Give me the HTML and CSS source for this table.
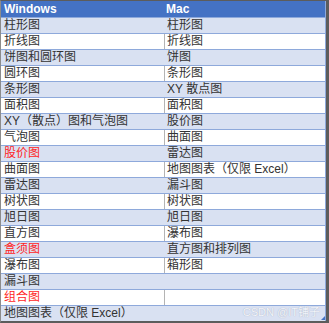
FILE: index.html
```html
<!DOCTYPE html>
<html>
<head>
<meta charset="utf-8">
<link rel="stylesheet" href="styles.css">
</head>
<body>
<div class="frame">
  <div class="sheet">
    <div class="row head"><div class="cell">Windows</div><div class="cell r">Mac</div></div>
    <div class="row band"><div class="cell">柱形图</div><div class="cell r">柱形图</div></div>
    <div class="row plain"><div class="cell">折线图</div><div class="cell r">折线图</div></div>
    <div class="row band"><div class="cell">饼图和圆环图</div><div class="cell r">饼图</div></div>
    <div class="row plain"><div class="cell">圆环图</div><div class="cell r">条形图</div></div>
    <div class="row band"><div class="cell">条形图</div><div class="cell r">XY 散点图</div></div>
    <div class="row plain"><div class="cell">面积图</div><div class="cell r">面积图</div></div>
    <div class="row band"><div class="cell">XY（散点）图和气泡图</div><div class="cell r">股价图</div></div>
    <div class="row plain"><div class="cell">气泡图</div><div class="cell r">曲面图</div></div>
    <div class="row band"><div class="cell red">股价图</div><div class="cell r">雷达图</div></div>
    <div class="row plain"><div class="cell">曲面图</div><div class="cell r">地图图表（仅限 Excel）</div></div>
    <div class="row band"><div class="cell">雷达图</div><div class="cell r">漏斗图</div></div>
    <div class="row plain"><div class="cell">树状图</div><div class="cell r">树状图</div></div>
    <div class="row band"><div class="cell">旭日图</div><div class="cell r">旭日图</div></div>
    <div class="row plain"><div class="cell">直方图</div><div class="cell r">瀑布图</div></div>
    <div class="row band"><div class="cell red">盒须图</div><div class="cell r">直方图和排列图</div></div>
    <div class="row plain"><div class="cell">瀑布图</div><div class="cell r">箱形图</div></div>
    <div class="row band"><div class="cell">漏斗图</div><div class="cell r"></div></div>
    <div class="row plain"><div class="cell red">组合图</div><div class="cell r"></div></div>
    <div class="row band last"><div class="cell">地图图表（仅限 Excel）</div><div class="cell r"></div></div>
  </div>
  <div class="watermark">CSDN @IT铺子</div>
  <div class="handle"></div>
</div>
</body>
</html>
```

FILE: styles.css
```css
html, body {
  margin: 0;
  padding: 0;
  background: #ffffff;
}
.frame {
  position: relative;
  width: 325px;
  border-top: 1px solid #5c5c5c;
  border-right: 3px solid #5c5c5c;
  border-bottom: 2px solid #5c5c5c;
  border-left: 1px solid #8c8c8c;
  font-family: "Liberation Sans", "Noto Sans CJK SC", sans-serif;
  font-size: 12px;
  color: #333333;
}
.sheet {
  display: flex;
  flex-direction: column;
  border-right: 1px solid #8ea9db;
}
.row {
  display: grid;
  grid-template-columns: 163px 1fr;
  height: 15px;
  line-height: 15px;
  border-top: 1px solid #8ea9db;
}
.row.head {
  height: 16px;
  line-height: 16px;
  border-top: none;
  background: #4472c4;
  color: #ffffff;
  font-weight: bold;
}
.row.band {
  background: #d9e1f2;
}
.row.plain {
  background: #ffffff;
}
.cell {
  padding-left: 3px;
  white-space: nowrap;
  overflow: hidden;
}
.cell.r {
  border-left: 1px solid transparent;
  padding-left: 2px;
}
.row.head .cell.r {
  padding-left: 1px;
}
.row.plain .cell.r {
  border-left-color: #b4b4b4;
}
.red {
  color: #ff1f1f;
}
.watermark {
  position: absolute;
  right: 6px;
  bottom: 2px;
  font-size: 11px;
  line-height: 14px;
  color: #f2f4fa;
  text-shadow: 0 0 1px #9aa3b5;
  font-family: "Liberation Sans", "Noto Sans CJK SC", sans-serif;
}
.handle {
  position: absolute;
  right: 1px;
  bottom: 1px;
  width: 0;
  height: 0;
  border-left: 4px solid transparent;
  border-bottom: 4px solid #4472c4;
}
```
